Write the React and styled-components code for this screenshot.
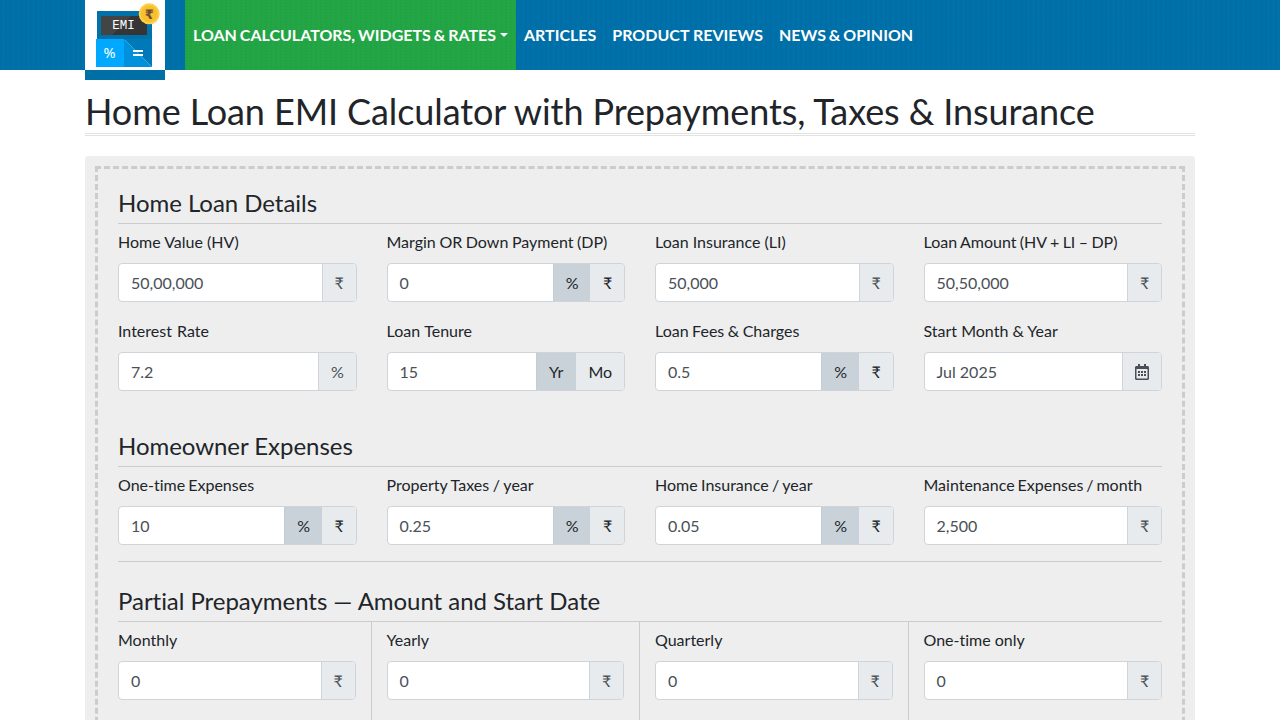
import React from "react";
import styled, { createGlobalStyle } from "styled-components";

const Global = createGlobalStyle`
  *, *::before, *::after { box-sizing: border-box; }
  html { overflow: hidden; }
  body {
    margin: 0;
    height: 720px;
    overflow: hidden;
    background: #fff;
    color: #212529;
    font-family: Lato, "Liberation Sans", sans-serif;
    font-size: 16px;
    line-height: 24px;
    font-variant-ligatures: none;
  }
`;

const weave = `
  repeating-linear-gradient(90deg, rgba(0, 0, 0, 0.025) 0 2px, transparent 2px 5px),
  repeating-linear-gradient(0deg, rgba(0, 0, 0, 0.012) 0 1px, transparent 1px 3px)`;

const Header = styled.header`
  height: 70px;
  background: ${weave}, #0071aa;
`;

const Container = styled.div`
  width: 1110px;
  margin: 0 auto;
`;

const NavBar = styled(Container)`
  display: flex;
  align-items: flex-start;
`;

const Brand = styled.a`
  width: 80px;
  height: 80px;
  margin-right: 20px;
  background: #fff;
  border-bottom: 10px solid #006fa6;
  svg { display: block; }
`;

const NavLink = styled.a`
  display: flex;
  align-items: center;
  height: 70px;
  padding: 0 8px;
  color: #fff;
  font-weight: 700;
  white-space: nowrap;
  word-spacing: ${(p) => p.$spacing || 0}px;
  background: ${(p) => (p.$active ? `${weave}, #23a746` : "none")};
`;

const Caret = styled.span`
  margin-left: 4px;
  border-top: 4.8px solid;
  border-left: 4.8px solid transparent;
  border-right: 4.8px solid transparent;
`;

const Title = styled.h1`
  margin: 20px 0;
  height: 46px;
  font-size: 36px;
  font-weight: 400;
  line-height: 43px;
  letter-spacing: -0.1px;
  white-space: nowrap;
  border-bottom: 3px double #e2e2e2;
`;

const Panel = styled.div`
  padding: 10px;
  background: #eee;
  border-radius: 4px;
`;

const Form = styled.form`
  height: 900px;
  padding: 20px;
  border: 3px dashed #ccc;
`;

const Section = styled.section`
  padding-bottom: ${(p) => p.$bottom || 0}px;
  margin-bottom: ${(p) => p.$gap || 0}px;
  border-bottom: ${(p) => (p.$ruled ? "1px solid #ccc" : "none")};
`;

const Heading = styled.h4`
  margin: 0;
  height: 35px;
  font-size: 24px;
  font-weight: 400;
  line-height: 27px;
  letter-spacing: -0.04px;
  border-bottom: 1px solid #ccc;
`;

const Grid = styled.div`
  display: grid;
  grid-template-columns: repeat(4, 268.5px);
  margin: 0 -15px;
`;

const Field = styled.div`
  padding: 6px 15px 0;
  height: ${(p) => (p.$divided ? 140 : p.$last ? 78 : 89)}px;
  border-right: ${(p) => (p.$divided && !p.$end ? "1px solid #ccc" : "none")};
`;

const Label = styled.label`
  display: block;
  height: 25px;
  margin-bottom: 8px;
  line-height: 24px;
  white-space: nowrap;
  word-spacing: ${(p) => p.$spacing || 0}px;
`;

const InputGroup = styled.div`
  display: flex;
  height: 39px;
  border: 1px solid #ced4da;
  border-radius: 4px;
  overflow: hidden;
  background: #fff;
`;

const Value = styled.span`
  flex: 1;
  padding: 0 12px;
  line-height: 38px;
  color: #495057;
`;

const Addon = styled.span`
  display: flex;
  align-items: center;
  justify-content: center;
  padding: 0 11.8px;
  background: #e7ebee;
  color: #495057;
  border-left: 1px solid #ced4da;
`;

const Toggle = styled(Addon)`
  color: #212529;
  background: ${(p) => (p.$on ? "#c9d2d9" : "#e7ebee")};
  border-left: ${(p) => (p.$on ? "1px solid #c4cdd5" : "0")};
  padding: 0 ${(p) => (p.$wide && p.$on ? 12.5 : 11.8)}px 0 ${(p) => (p.$on ? 12 : 12.6)}px;
`;

function Logo() {
  return (
    <svg width="80" height="70" viewBox="0 0 80 70">
      <path fill="#0071a9" d="M12 11h55v29H12z" />
      <path fill="#353535" d="M16 16h46v19H16z" />
      <path fill="#444" d="M16 16h30L27 35H16z" />
      <path fill="#00a9fd" d="M11 39h28v28H11z" />
      <path fill="#0079b8" d="M39 39h28v28z" />
      <path fill="#0091dc" d="M39 39v28h28z" />
      <text x="38.500" y="29" textAnchor="middle" fill="#fff" fontFamily="Liberation Mono, monospace" fontSize="12.500">EMI</text>
      <text x="24.500" y="57.500" textAnchor="middle" fill="#fff" fontFamily="Noto Sans, sans-serif" fontSize="14.500">%</text>
      <path fill="#fff" d="M48 50h10v2H48zM48 54h10v2H48z" />
      <circle cx="64.200" cy="13.800" r="10.500" fill="#fbd04a" />
      <circle cx="64.200" cy="13.800" r="8.500" fill="#f8c02c" />
      <text x="64.200" y="19" textAnchor="middle" fill="#6d4c35" fontFamily="DejaVu Sans, sans-serif" fontWeight="700" fontSize="13">₹</text>
    </svg>
  );
}

function Calendar() {
  return (
    <svg width="14" height="16" viewBox="0 0 448 512" fill="currentColor">
      <path d="M148 288h-40c-6.600 0-12-5.400-12-12v-40c0-6.600 5.400-12 12-12h40c6.600 0 12 5.400 12 12v40c0 6.600-5.400 12-12 12zm108-12v-40c0-6.600-5.400-12-12-12h-40c-6.600 0-12 5.400-12 12v40c0 6.600 5.400 12 12 12h40c6.600 0 12-5.400 12-12zm96 0v-40c0-6.600-5.400-12-12-12h-40c-6.600 0-12 5.400-12 12v40c0 6.600 5.400 12 12 12h40c6.600 0 12-5.400 12-12zm-96 96v-40c0-6.600-5.400-12-12-12h-40c-6.600 0-12 5.400-12 12v40c0 6.600 5.400 12 12 12h40c6.600 0 12-5.400 12-12zm-96 0v-40c0-6.600-5.400-12-12-12h-40c-6.600 0-12 5.400-12 12v40c0 6.600 5.400 12 12 12h40c6.600 0 12-5.400 12-12zm192 0v-40c0-6.600-5.400-12-12-12h-40c-6.600 0-12 5.400-12 12v40c0 6.600 5.400 12 12 12h40c6.600 0 12-5.400 12-12zm96-260v352c0 26.500-21.500 48-48 48H48c-26.500 0-48-21.500-48-48V112c0-26.500 21.500-48 48-48h48V12c0-6.600 5.400-12 12-12h40c6.600 0 12 5.400 12 12v52h128V12c0-6.600 5.400-12 12-12h40c6.600 0 12 5.400 12 12v52h48c26.500 0 48 21.500 48 48zm-48 346V160H48v298c0 3.300 2.700 6 6 6h340c3.300 0 6-2.700 6-6z" />
    </svg>
  );
}

function Entry({ label, value, unit, units, spacing, ...layout }) {
  return (
    <Field {...layout}>
      <Label $spacing={spacing}>{label}</Label>
      <InputGroup>
        <Value>{value}</Value>
        {units
          ? units.map((u, i) => (
              <Toggle key={u} $on={i === 0} $wide={u.length > 1}>{u}</Toggle>
            ))
          : <Addon>{unit}</Addon>}
      </InputGroup>
    </Field>
  );
}

const PR = ["%", "₹"];
const loan = [
  { label: "Home Value (HV)", value: "50,00,000", unit: "₹" },
  { label: "Margin OR Down Payment (DP)", value: "0", units: PR, spacing: -0.5 },
  { label: "Loan Insurance (LI)", value: "50,000", unit: "₹" },
  { label: "Loan Amount (HV + LI – DP)", value: "50,50,000", unit: "₹", spacing: -0.7 },
  { label: "Interest Rate", value: "7.2", unit: "%", spacing: 1 },
  { label: "Loan Tenure", value: "15", units: ["Yr", "Mo"], spacing: 0.5 },
  { label: "Loan Fees & Charges", value: "0.5", units: PR, spacing: -0.6 },
  { label: "Start Month & Year", value: "Jul 2025", unit: <Calendar /> },
];
const expenses = [
  { label: "One-time Expenses", value: "10", units: PR, spacing: -1 },
  { label: "Property Taxes / year", value: "0.25", units: PR, spacing: -0.4 },
  { label: "Home Insurance / year", value: "0.05", units: PR, spacing: -0.7 },
  { label: "Maintenance Expenses / month", value: "2,500", unit: "₹", spacing: -1.2 },
];
const prepayments = ["Monthly", "Yearly", "Quarterly", "One-time only"];

export default function App() {
  return (
    <>
      <Global />
      <Header>
        <NavBar as="nav">
          <Brand><Logo /></Brand>
          <NavLink $active $spacing={-1}>LOAN CALCULATORS, WIDGETS &amp; RATES<Caret /></NavLink>
          <NavLink>ARTICLES</NavLink>
          <NavLink>PRODUCT REVIEWS</NavLink>
          <NavLink $spacing={-1}>NEWS &amp; OPINION</NavLink>
        </NavBar>
      </Header>
      <Container as="main">
        <Title>Home Loan EMI Calculator with Prepayments, Taxes &amp; Insurance</Title>
        <Panel>
          <Form>
            <Section $gap={30}>
              <Heading>Home Loan Details</Heading>
              <Grid>{loan.map((f) => <Entry key={f.label} {...f} />)}</Grid>
            </Section>
            <Section $ruled $bottom={16} $gap={25}>
              <Heading>Homeowner Expenses</Heading>
              <Grid>{expenses.map((f) => <Entry key={f.label} {...f} $last />)}</Grid>
            </Section>
            <Section>
              <Heading>Partial Prepayments — Amount and Start Date</Heading>
              <Grid>
                {prepayments.map((label, i) => (
                  <Entry key={label} label={label} value="0" unit="₹" $divided $end={i === 3} />
                ))}
              </Grid>
            </Section>
          </Form>
        </Panel>
      </Container>
    </>
  );
}
